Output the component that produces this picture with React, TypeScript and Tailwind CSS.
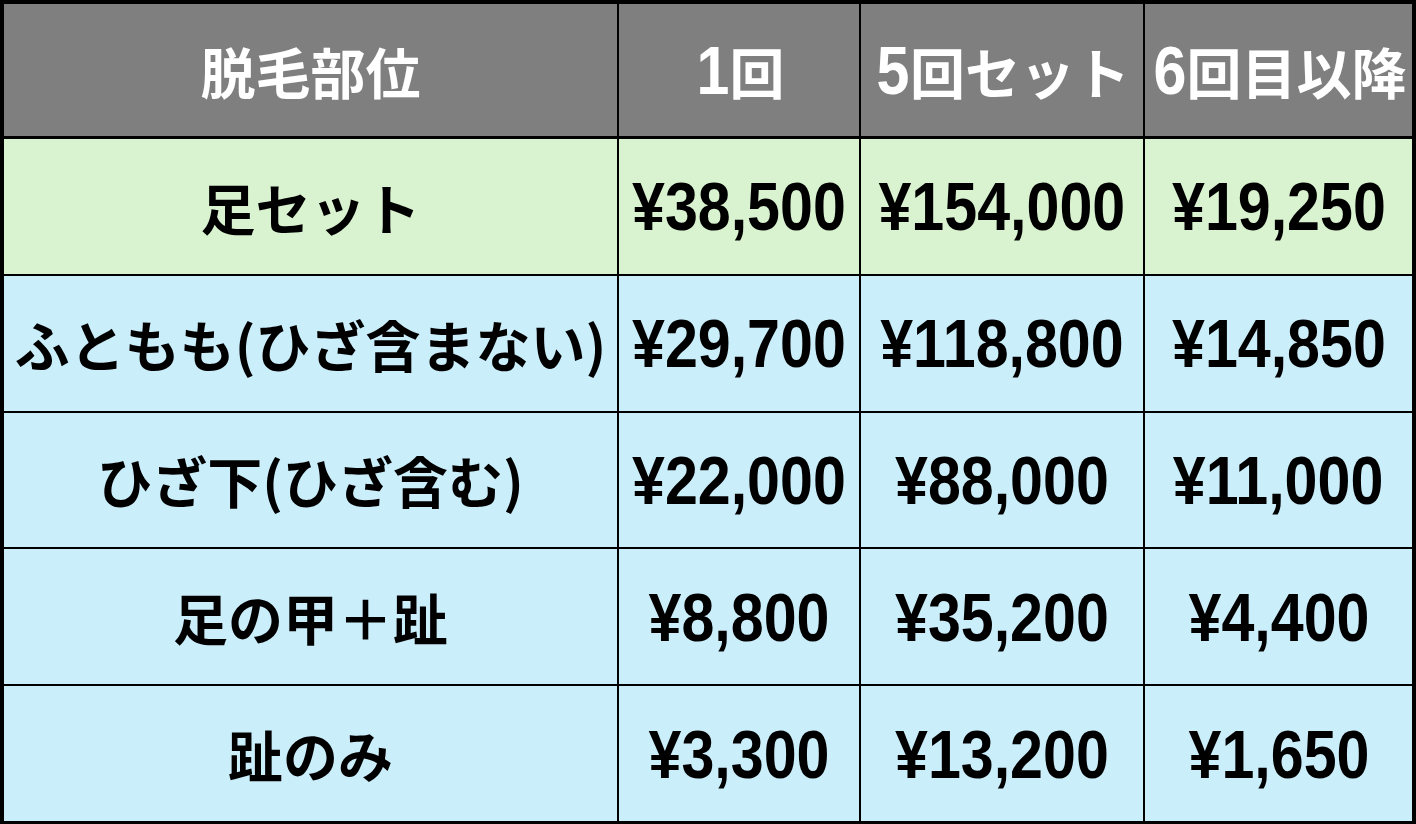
import React from "react";

const jp = "font-['Noto_Sans_CJK_JP',sans-serif]";

function Num({ children }: { children: React.ReactNode }) {
  return (
    <span className="inline-block origin-center scale-x-[0.87] font-['Liberation_Sans',sans-serif] text-[68px] font-bold leading-none">
      {children}
    </span>
  );
}

const rows = [
  { label: "足セット", bg: "bg-[#d9f2d0]", p: ["¥38,500", "¥154,000", "¥19,250"] },
  { label: "ふともも(ひざ含まない)", bg: "bg-[#cbeefb]", p: ["¥29,700", "¥118,800", "¥14,850"] },
  { label: "ひざ下(ひざ含む)", bg: "bg-[#cbeefb]", p: ["¥22,000", "¥88,000", "¥11,000"] },
  { label: "足の甲＋趾", bg: "bg-[#cbeefb]", p: ["¥8,800", "¥35,200", "¥4,400"] },
  { label: "趾のみ", bg: "bg-[#cbeefb]", p: ["¥3,300", "¥13,200", "¥1,650"] },
];

const cols = "grid grid-cols-[613px_240px_282px_267px] gap-x-[2px]";

function HeadCell({ n, t }: { n?: string; t: string }) {
  return (
    <div className={`flex items-center justify-center bg-[#7f7f7f] ${jp} text-[55px] font-bold leading-none`}>
      <span className="flex items-baseline">
        {n && <Num>{n}</Num>}
        <span className={n ? "-ml-[2px]" : ""}>{t}</span>
      </span>
    </div>
  );
}

export default function App() {
  return (
    <div className="flex h-[824px] w-[1416px] flex-col bg-black pb-[3px] pl-[4px] pr-[4px] pt-[4px]">
      <div className={`${cols} h-[132px] text-white`}>
        <HeadCell t="脱毛部位" />
        <HeadCell n="1" t="回" />
        <HeadCell n="5" t="回セット" />
        <HeadCell n="6" t="回目以降" />
      </div>
      <div className="mt-[3px] flex flex-1 flex-col gap-y-[2px]">
        {rows.map((r) => (
          <div key={r.label} className={`${cols} flex-1 text-black`}>
            <div className={`flex items-center justify-center ${r.bg} ${jp} text-[55px] font-bold leading-none`}>
              {r.label}
            </div>
            {r.p.map((v, i) => (
              <div key={i} className={`flex items-center justify-center ${r.bg}`}>
                <Num>{v}</Num>
              </div>
            ))}
          </div>
        ))}
      </div>
    </div>
  );
}
